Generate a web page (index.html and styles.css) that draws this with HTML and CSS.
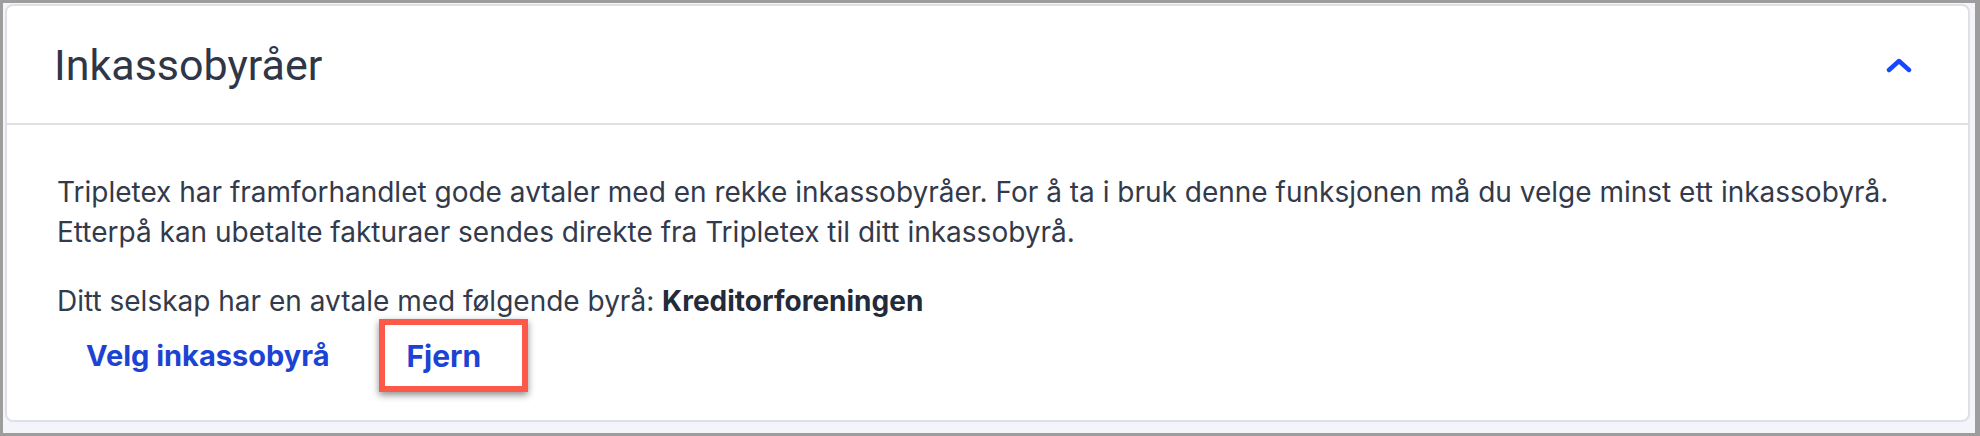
FILE: index.html
```html
<!DOCTYPE html>
<html lang="no">
<head>
  <meta charset="UTF-8" />
  <title>Inkassobyråer</title>
  <link rel="stylesheet" href="styles.css">
</head>
<body>
  <div class="frame">
    <div class="card">
      <div class="card-header">
        <h2>Inkassobyråer</h2>
        <button class="collapse-btn" aria-label="Skjul">
          <svg width="26" height="16" viewBox="0 0 26 16">
            <path d="M3 13 L13 4 L23 13" fill="none" stroke="#1747ff" stroke-width="4.4" stroke-linecap="round" stroke-linejoin="round"/>
          </svg>
        </button>
      </div>

      <div class="card-body">
        <p class="intro">
          Tripletex har framforhandlet gode avtaler med en rekke inkassobyråer. For å ta i bruk denne funksjonen må du velge minst ett inkassobyrå.<br>
          Etterpå kan ubetalte fakturaer sendes direkte fra Tripletex til ditt inkassobyrå.
        </p>
        <p class="agreement">Ditt selskap har en avtale med følgende byrå: <b>Kreditorforeningen</b></p>

        <div class="actions">
          <button class="link-btn">Velg inkassobyrå</button>
          <!-- markering rundt knappen -->
          <div class="highlight">
            <button class="link-btn">Fjern</button>
          </div>
        </div>
      </div>
    </div>
  </div>
</body>
</html>
```

FILE: styles.css
```css
* {
  box-sizing: border-box;
}

body {
  margin: 0;
  font-family: Inter, Roboto, "Liberation Sans", sans-serif;
  background-color: #9d9d9d;
}

.frame {
  width: 1980px;
  height: 436px;
  border-style: solid;
  border-color: #9d9d9d;
  border-width: 3px 5px 3px 3px;
  background-color: #f4f5fa;
  padding: 1px 5px 11px 2px;
}

.card {
  height: 100%;
  background-color: #ffffff;
  border: 2px solid #dfe0e5;
  border-radius: 8px;
  color: #323a4c;
}

.card-header {
  height: 119px;
  display: flex;
  align-items: center;
  justify-content: space-between;
  padding: 0 56px 0 47px;
  border-bottom: 2px solid #e0e1e5;
}

.card-header h2 {
  margin: 0;
  font-family: Roboto, "Liberation Sans", sans-serif;
  font-size: 43px;
  font-weight: 400;
  color: #2e3648;
}

.collapse-btn {
  background: none;
  border: none;
  padding: 0;
  display: flex;
  cursor: pointer;
}

.card-body {
  padding: 47px 40px 0 50px;
  font-size: 28px;
  line-height: 40px;
}

.card-body p {
  margin: 0;
}

.intro {
  margin-bottom: 29px !important;
}

.agreement b {
  font-weight: 700;
  color: #232a3a;
}

.actions {
  display: flex;
  align-items: center;
  gap: 27px;
  margin-top: -2px;
  margin-left: 7px;
}

.link-btn {
  height: 61px;
  padding: 0 22px;
  background: none;
  border: none;
  font-family: inherit;
  font-size: 29px;
  font-weight: 700;
  color: #1c43d4;
  cursor: pointer;
}

.highlight {
  border: 6px solid #fd594a;
  box-shadow: 0 3px 7px rgba(0, 0, 0, 0.45);
  padding-right: 19px;
}

.highlight .link-btn {
  font-size: 30px;
}
```
